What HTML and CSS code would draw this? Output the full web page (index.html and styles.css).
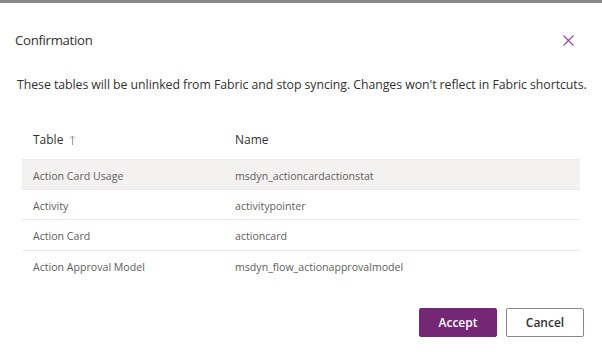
FILE: index.html
```html
<!doctype html>
<html>
<head>
    <meta charset="utf-8" />
    <title>Confirmation</title>
    <link rel="stylesheet" href="styles.css">
</head>
<body>
<div class="topbar"></div>
<div class="dialog">
    <div class="dialog-head">
        <h1 class="dialog-title">Confirmation</h1>
        <button class="close-btn" aria-label="Close">
            <svg width="11" height="11" viewBox="0 0 11 11">
                <path d="M0.5 0.5 L10.5 10.5 M10.5 0.5 L0.5 10.5" stroke="#8a4a93" stroke-width="1.1" fill="none"/>
            </svg>
        </button>
    </div>
    <p class="dialog-text">These tables will be unlinked from Fabric and stop syncing. Changes won't reflect in Fabric shortcuts.</p>
    <div class="grid">
        <div class="grid-row grid-header">
            <div class="cell col-table">Table
                <svg class="sort" width="7" height="10" viewBox="0 0 7 10">
                    <path d="M3.5 1 L3.5 10 M1 3.5 L3.5 1 L6 3.5" stroke="#a19f9d" stroke-width="1" fill="none"/>
                </svg>
            </div>
            <div class="cell col-name">Name</div>
        </div>
        <div class="grid-row selected">
            <div class="cell col-table">Action Card Usage</div>
            <div class="cell col-name">msdyn_actioncardactionstat</div>
        </div>
        <div class="grid-row">
            <div class="cell col-table">Activity</div>
            <div class="cell col-name">activitypointer</div>
        </div>
        <div class="grid-row">
            <div class="cell col-table">Action Card</div>
            <div class="cell col-name">actioncard</div>
        </div>
        <div class="grid-row last">
            <div class="cell col-table">Action Approval Model</div>
            <div class="cell col-name">msdyn_flow_actionapprovalmodel</div>
        </div>
    </div>
    <div class="dialog-foot">
        <button class="btn primary">Accept</button>
        <button class="btn">Cancel</button>
    </div>
</div>
</body>
</html>
```

FILE: styles.css
```css
*{
    margin:0px;
    padding:0px;
    box-sizing:border-box;
}
html,body{
    width:100%;
    height:100%;
    background-color:#fff;
    font-family:'Open Sans','Noto Sans',sans-serif;
    color:#323130;
}
.topbar{
    height:3px;
    background-color:#8a8886;
}
.dialog{
    padding:0px 17px 0px 17px;
}
.dialog-head{
    display:flex;
    justify-content:space-between;
    align-items:center;
    height:53px;
    padding-top:21px;
}
.dialog-title{
    font-size:13.2px;
    font-weight:normal;
    letter-spacing:-0.3px;
    margin-left:-2px;
}
.close-btn{
    border:none;
    background:none;
    width:11px;
    height:11px;
    margin-right:11px;
    display:flex;
}
.dialog-text{
    font-size:12.3px;
    margin-top:20px;
    white-space:nowrap;
    letter-spacing:-0.05px;
}
.grid{
    margin:27px 5px 0px 5px;
}
.grid-row{
    display:flex;
    align-items:center;
    height:30.5px;
    border-bottom:1px solid #edebe9;
    font-size:10.6px;
    color:#605e5c;
}
.grid-row .cell{
    padding-top:3px;
}
.grid-header{
    height:39px;
    font-size:12px;
    color:#323130;
    border-bottom:none;
}
.grid-header .cell{
    padding-top:0px;
}
.grid-row.selected{
    background-color:#f3f2f1;
    border-top:1px solid #edebe9;
}
.grid-row.last{
    border-bottom:none;
}
.cell{
    padding-left:11px;
}
.col-table{
    width:202px;
}
.sort{
    margin-left:2px;
    vertical-align:-1px;
}
.dialog-foot{
    display:flex;
    justify-content:flex-end;
    gap:9px;
    margin-top:27px;
    padding-right:1px;
}
.btn{
    width:78px;
    height:29px;
    border:1px solid #8a8886;
    border-radius:2px;
    background-color:#fff;
    font-family:'Open Sans','Noto Sans',sans-serif;
    font-size:12px;
    font-weight:600;
    color:#323130;
}
.btn.primary{
    background-color:#742774;
    border-color:#742774;
    color:#fff;
}
```
